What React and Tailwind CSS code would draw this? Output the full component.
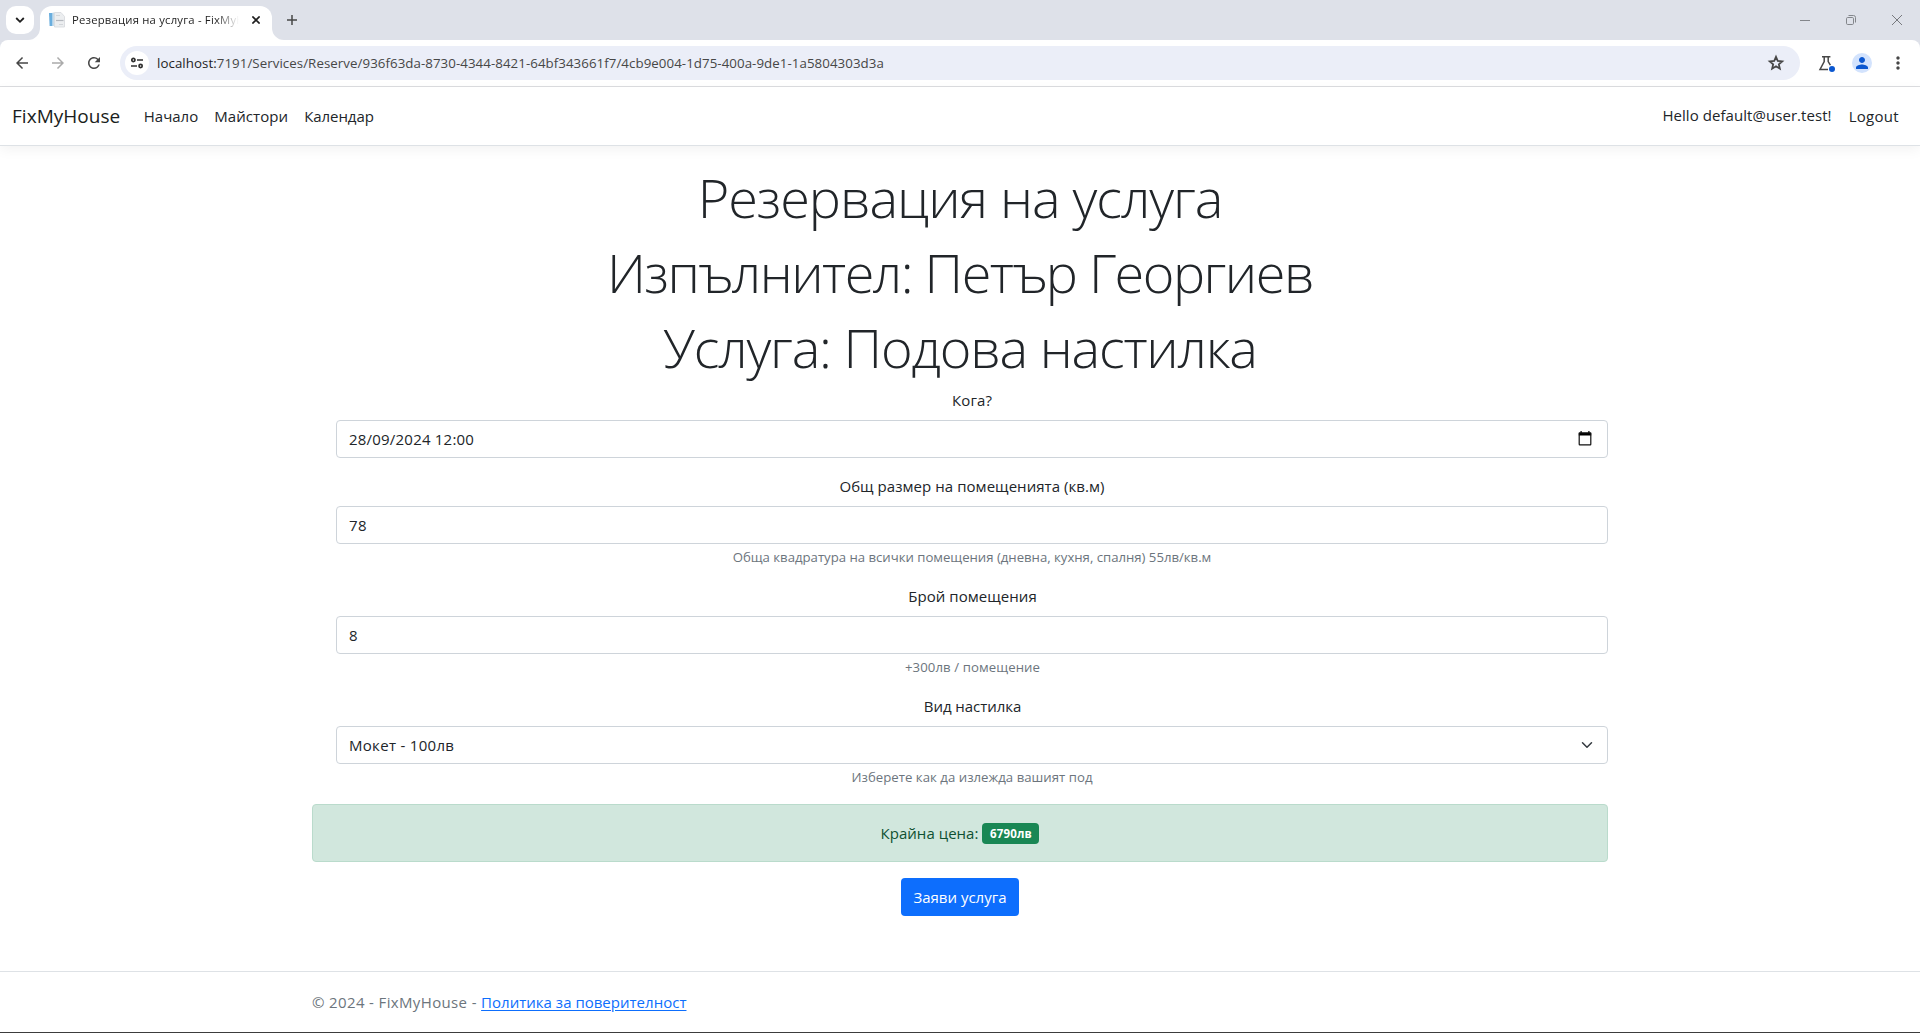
import { MdArrowBack, MdArrowForward, MdRefresh, MdPerson, MdMoreVert } from 'react-icons/md';

function TabStrip() {
  return (
    <div className="flex h-10 items-center bg-[#dee1e9] pl-1.5">
      <button className="flex h-7 w-7 items-center justify-center rounded-[10px] bg-white">
        <svg width="10" height="10" viewBox="0 0 10 10" fill="none" stroke="#1f1f1f" strokeWidth="1.8">
          <path d="M1.2 3 5 6.8 8.8 3" />
        </svg>
      </button>
      <div className="relative ml-1.5 mt-1.5 flex h-[34px] w-[232px] items-center rounded-t-xl bg-white pb-1.5 pl-[9px]">
        <svg className="absolute -left-3 bottom-0" width="12" height="12" viewBox="0 0 12 12" fill="#fff">
          <path d="M12 0v12H0A12 12 0 0 0 12 0Z" />
        </svg>
        <svg className="absolute -right-3 bottom-0" width="12" height="12" viewBox="0 0 12 12" fill="#fff">
          <path d="M0 0v12h12A12 12 0 0 1 0 0Z" />
        </svg>
        <svg width="16" height="16" viewBox="0 0 16 16">
          <path d="M0 1h3.6v13H.6z" fill="#6aaede" />
          <path d="M3.6.5h1.6V14H3.6z" fill="#c9dcea" />
          <path d="M5.5.5h6.5l3.5 4V15H5.5z" fill="#eceef0" stroke="#d5d8dc" strokeWidth=".8" />
          <path d="M7 3.5h4M10 12.5h4" stroke="#d3d6da" strokeWidth="1" />
          <path d="M7 8.5h7.5" stroke="#b4b8be" strokeWidth="1.2" />
        </svg>
        <div className="ml-[7px] w-[167px] overflow-hidden whitespace-nowrap text-[11.3px] leading-4 tracking-[0.2px] text-[#1f1f1f] [mask-image:linear-gradient(to_right,#000_86%,transparent)]">
          Резервация на услуга - FixMyHouse
        </div>
        <svg className="ml-[13px]" width="8" height="8" viewBox="0 0 8 8" stroke="#1f1f1f" strokeWidth="1.6">
          <path d="m.4.4 7.2 7.2M7.6.4.4 7.6" />
        </svg>
      </div>
      <svg className="ml-[15px]" width="10" height="10" viewBox="0 0 10 10" stroke="#474747" strokeWidth="1.5">
        <path d="M5 0v10M0 5h10" />
      </svg>
      <div className="ml-auto flex items-center gap-9 pr-[18px]">
        <svg width="10" height="10" viewBox="0 0 10 10" stroke="#83868b"><path d="M0 5.5h10" /></svg>
        <svg width="10" height="10" viewBox="0 0 10 10" fill="none" stroke="#83868b">
          <rect x=".5" y="2.5" width="7" height="7" rx="1.2" />
          <path d="M2.5.5h5a2 2 0 0 1 2 2v5" />
        </svg>
        <svg width="10" height="10" viewBox="0 0 10 10" stroke="#77797e"><path d="m0 0 10 10M10 0 0 10" /></svg>
      </div>
    </div>
  );
}

function Toolbar() {
  return (
    <div className="bg-[#dee1e9]">
      <div className="flex h-[47px] items-center rounded-t-lg border-b border-[#dcdde0] bg-white pl-[13px] text-[#474747]">
        <MdArrowBack size={18} />
        <MdArrowForward size={18} className="ml-[18px] text-[#ababab]" />
        <MdRefresh size={18} className="ml-[18px]" />
        <div className="ml-[17px] flex h-[34px] w-[1680px] items-center rounded-full bg-[#ebeef8] pl-[5px] pr-3.5">
          <div className="flex h-6 w-6 items-center justify-center rounded-full bg-white">
            <svg width="14" height="12" viewBox="0 0 14 12" fill="none" stroke="#303030" strokeWidth="1.7">
              <circle cx="3.4" cy="3" r="1.6" />
              <path d="M7 3h6M1 9h6" />
              <circle cx="10.6" cy="9" r="1.6" />
            </svg>
          </div>
          <div className="ml-2 whitespace-nowrap text-[13.3px] leading-5 tracking-[0.058px] text-[#474747]">
            <span className="text-[#1f1f1f]">localhost:</span>7191/Services/Reserve/936f63da-8730-4344-8421-64bf343661f7/4cb9e004-1d75-400a-9de1-1a5804303d3a
          </div>
          <svg className="ml-auto" width="20" height="20" viewBox="0 0 24 24" fill="none" stroke="currentColor" strokeWidth="2.1">
            <path d="m12 4.6 2.1 4.95 5.4.47-4.1 3.55 1.23 5.26L12 16.04l-4.63 2.79 1.23-5.26-4.1-3.55 5.4-.47z" />
          </svg>
        </div>
        <svg className="ml-[18px]" width="18" height="18" viewBox="0 0 18 18" fill="none">
          <path d="M4 2.7h8.4M6.2 3v4.6L2 15.4h8M10.2 3v4.6l2.2 3.6" stroke="#474747" strokeWidth="1.5" />
          <circle cx="14" cy="15" r="3" fill="#0b57d0" />
        </svg>
        <div className="ml-4 flex h-5 w-5 items-center justify-center rounded-full bg-[#d3e3fd]">
          <MdPerson size={18} className="text-[#0b57d0]" />
        </div>
        <MdMoreVert size={20} className="ml-4" />
      </div>
    </div>
  );
}

function Navbar() {
  return (
    <nav className="flex h-[59px] items-center border-b border-[#dee2e6] pl-3 pr-[21px] text-[15px] leading-6 text-[#212529] shadow-[0_4px_12px_rgba(0,0,0,0.05)]">
      <a className="text-[19px] leading-[30px] tracking-[0.03px] text-[#1a1d20]">FixMyHouse</a>
      <a className="ml-[23.5px]">Начало</a>
      <a className="ml-4 tracking-[0.07px]">Майстори</a>
      <a className="ml-4 tracking-[-0.05px]">Календар</a>
      <span className="ml-auto pb-0.5 tracking-[0.06px]">Hello default@user.test!</span>
      <a className="ml-[17px] tracking-[0.3px]">Logout</a>
    </nav>
  );
}

function Field({ label, hint, children, labelClass = '', hintClass = '' }) {
  return (
    <div className="flex flex-col items-center pl-6">
      <label className={`mb-2 leading-6 ${labelClass}`}>{label}</label>
      <div className="flex h-[38px] w-full items-center justify-between rounded border border-[#ced4da] px-3">{children}</div>
      {hint && <div className={`mb-px mt-[3px] text-[13.2px] leading-[21px] text-[#6c757d] ${hintClass}`}>{hint}</div>}
    </div>
  );
}

export default function App() {
  return (
    <div className="flex h-[1033px] w-[1920px] flex-col overflow-hidden border-b border-[#3c3c3c] bg-white font-['Open_Sans','Noto_Sans',sans-serif] text-[15px] text-[#212529]">
      <TabStrip />
      <Toolbar />
      <Navbar />
      <main className="mx-auto mt-[18px] flex w-[1296px] flex-col">
        <div className="flex flex-col items-center gap-2 whitespace-nowrap text-[54px] font-light leading-[67px]">
          <h1 className="tracking-[-1.05px]">Резервация на услуга</h1>
          <h1 className="tracking-[-1.5px]">Изпълнител: Петър Георгиев</h1>
          <h1 className="tracking-[-1.2px]">Услуга: Подова настилка</h1>
        </div>
        <div className="mt-[7px] flex flex-col gap-[15px]">
          <div className="pb-px">
            <Field label="Кога?" labelClass="tracking-[0.1px]">
              <span className="tracking-[0.21px]">28/09/2024 12:00</span>
              <svg className="mb-px mr-[3px]" width="14" height="15" viewBox="0 0 14 15" fill="none">
                <path d="M2.5 0h1.2v2H2.5zM10.3 0h1.2v2h-1.2zM.8 1.5h12.4v2.9H.8z" fill="#000" />
                <rect x="1.2" y="2" width="11.6" height="11.9" rx=".6" stroke="#111" strokeWidth="1.2" />
              </svg>
            </Field>
          </div>
          <Field label="Общ размер на помещенията (кв.м)" labelClass="tracking-[0.057px]" hint="Обща квадратура на всички помещения (дневна, кухня, спалня) 55лв/кв.м" hintClass="tracking-[-0.02px]">
            <span className="tracking-[0.3px]">78</span>
          </Field>
          <Field label="Брой помещения" labelClass="pl-px tracking-[0.06px]" hint="+300лв / помещение" hintClass="pl-px tracking-[0.09px]">
            <span>8</span>
          </Field>
          <Field label="Вид настилка" labelClass="pl-px tracking-[-0.05px]" hint="Изберете как да излежда вашият под" hintClass="tracking-[0.025px]">
            <span className="tracking-[0.3px]">Мокет - 100лв</span>
            <svg className="mr-0.5" width="12" height="12" viewBox="0 0 16 16" fill="none" stroke="#343a40" strokeWidth="2" strokeLinecap="round" strokeLinejoin="round">
              <path d="m2 5 6 6 6-6" />
            </svg>
          </Field>
        </div>
        <div className="mt-[15px] flex h-[58px] items-center justify-center rounded border border-[#badbcc] bg-[#d1e7dd] text-[#0f5132]">
          <span className="tracking-[0.04px]">Крайна цена:</span>
          <span className="ml-1 flex h-[21px] w-[57px] items-center justify-center rounded bg-[#198754] pt-0.5 text-[11.5px] font-bold tracking-[0.13px] text-white">6790лв</span>
        </div>
        <button className="mt-4 h-[38px] w-[118px] self-center rounded bg-[#0d6efd] text-white">Заяви услуга</button>
      </main>
      <footer className="mt-auto h-[61px] border-t border-[#dee2e6] text-[#6c757d]">
        <div className="mx-auto w-[1296px] leading-[60px]">
          <span className="tracking-[0.36px]">© 2024 - FixMyHouse - </span>
          <a className="tracking-[0.014px] text-[#0d6efd] underline underline-offset-2">Политика за поверителност</a>
        </div>
      </footer>
    </div>
  );
}
